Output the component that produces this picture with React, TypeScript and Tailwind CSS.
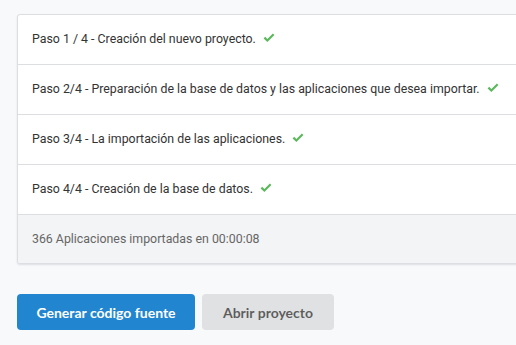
const steps = [
  'Paso 1 / 4 - Creación del nuevo proyecto.',
  'Paso 2/4 - Preparación de la base de datos y las aplicaciones que desea importar.',
  'Paso 3/4 - La importación de las aplicaciones.',
  'Paso 4/4 - Creación de la base de datos.',
]

function Check() {
  return (
    <svg viewBox="0 0 12 10" className="w-[12px] h-[10px] ml-[7px] shrink-0 -mt-[4px]">
      <path d="M0.6 5.4 L2.2 3.8 L4.4 6 L9.9 0.5 L11.4 2 L4.4 9 Z" fill="#5cb85c" />
    </svg>
  )
}

export default function App() {
  return (
    <div className="w-[516px] h-[345px] bg-[#f8f9fb] overflow-hidden pt-[14px] pl-[17px]">
      <div className="w-[530px] bg-white border border-[#dcdee1] rounded-[3px] shadow-[0_1px_2px_rgba(34,36,38,0.12)]">
        {steps.map((s) => (
          <div
            key={s}
            className="h-[50px] flex items-center pl-[14px] border-b border-[#dcdee1] text-[12.35px] text-[#333] font-['Roboto',sans-serif]"
          >
            <span>{s}</span>
            <Check />
          </div>
        ))}
        <div className="h-[48px] flex items-center pl-[14px] bg-[#f3f4f5] rounded-b-[3px] text-[12.35px] text-[#666] font-['Roboto',sans-serif]">
          366 Aplicaciones importadas en 00:00:08
        </div>
      </div>
      <div className="flex gap-[7px] mt-[30px] font-['Lato',sans-serif] font-bold text-[14px]">
        <button className="w-[178px] h-[36px] rounded-[4px] bg-[#2185d0] text-white">Generar código fuente</button>
        <button className="w-[132px] h-[36px] rounded-[4px] bg-[#e0e1e2] text-[rgba(0,0,0,0.6)]">Abrir proyecto</button>
      </div>
    </div>
  )
}
